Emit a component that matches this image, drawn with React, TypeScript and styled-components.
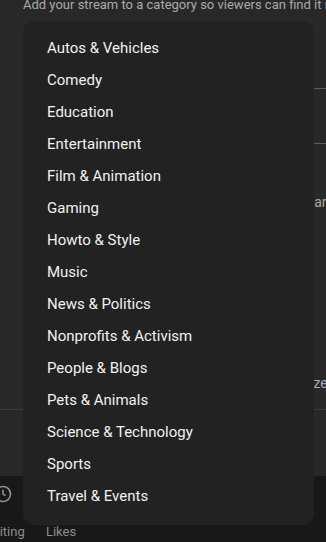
import React from "react";
import styled, { createGlobalStyle } from "styled-components";

const GlobalStyle = createGlobalStyle`
  html, body { margin: 0; padding: 0; background: #282828; overflow: hidden; }
  body { font-family: Roboto, "Noto Sans", "Liberation Sans", sans-serif; -webkit-font-smoothing: antialiased; }
  * { box-sizing: border-box; }
`;

const Page = styled.div`
  position: relative;
  width: 326px;
  height: 542px;
  display: flex;
  flex-direction: column;
  overflow: hidden;
  background: #282828;
`;

const Main = styled.div`
  flex: 1;
  display: flex;
  flex-direction: column;
`;

const Description = styled.div`
  margin-top: -5px;
  padding-left: 23px;
  font-size: 13px;
  line-height: 20px;
  color: #aaaaaa;
  white-space: nowrap;
  overflow: hidden;
`;

const Field = styled.div<{ $h: number }>`
  height: ${(p) => p.$h}px;
  margin-left: 23px;
  border-bottom: 1px solid #5e5e5e;
`;

const Hint = styled.div<{ $top: number }>`
  margin-top: ${(p) => p.$top}px;
  padding-left: 23px;
  font-size: 14px;
  line-height: 20px;
  color: #aaaaaa;
  white-space: nowrap;
  overflow: hidden;
`;

const Divider = styled.div<{ $top: number }>`
  margin-top: ${(p) => p.$top}px;
  height: 1px;
  background: #3b3b3b;
`;

const Footer = styled.div`
  height: 66px;
  background: #181818;
  display: flex;
  align-items: flex-start;
  padding-top: 8px;
`;

const StatsRow = styled.div`
  display: flex;
  gap: 14px;
  margin-left: -19px;
`;

const Stat = styled.div`
  width: 44px;
  display: flex;
  flex-direction: column;
  align-items: center;
  gap: 20px;
  color: #8c8c8c;
`;

const StatLabel = styled.span`
  font-size: 13px;
  line-height: 16px;
  white-space: nowrap;
`;

const Menu = styled.ul`
  position: absolute;
  left: 23px;
  top: 21px;
  width: 291px;
  margin: 0;
  padding: 11px 0 13px;
  list-style: none;
  background: #222222;
  border-radius: 12px;
`;

const MenuItem = styled.li`
  height: 32px;
  line-height: 32px;
  padding-left: 24px;
  font-size: 15px;
  color: #f1f1f1;
  white-space: nowrap;
`;

const categories = [
  "Autos & Vehicles",
  "Comedy",
  "Education",
  "Entertainment",
  "Film & Animation",
  "Gaming",
  "Howto & Style",
  "Music",
  "News & Politics",
  "Nonprofits & Activism",
  "People & Blogs",
  "Pets & Animals",
  "Science & Technology",
  "Sports",
  "Travel & Events",
];

const ClockIcon = () => (
  <svg width="20" height="20" viewBox="0 0 24 24" fill="none" stroke="currentColor" strokeWidth="2">
    <circle cx="12" cy="12" r="9" />
    <path d="M12 7v5l3 2" />
  </svg>
);

const ThumbIcon = () => (
  <svg width="20" height="20" viewBox="0 0 24 24" fill="none" stroke="currentColor" strokeWidth="2">
    <path d="M7 10v11H3V10h4zM7 10l4-8c1.7 0 3 1.3 3 3v4h5.5a2 2 0 0 1 2 2.3l-1.4 8A2 2 0 0 1 18 21H7" />
  </svg>
);

export default function App() {
  return (
    <>
      <GlobalStyle />
      <Page>
        <Main>
          <Description>Add your stream to a category so viewers can find it more easily</Description>
          <Field $h={74} />
          <Field $h={55} />
          <Hint $top={48}>Add a short tag line that lets people know your area</Hint>
          <Hint $top={161}>Schedules show in the time zones you customize</Hint>
          <Divider $top={16} />
        </Main>
        <Footer>
          <StatsRow>
            <Stat>
              <ClockIcon />
              <StatLabel>Waiting</StatLabel>
            </Stat>
            <Stat>
              <ThumbIcon />
              <StatLabel>Likes</StatLabel>
            </Stat>
          </StatsRow>
        </Footer>
        <Menu>
          {categories.map((c) => (
            <MenuItem key={c}>{c}</MenuItem>
          ))}
        </Menu>
      </Page>
    </>
  );
}
